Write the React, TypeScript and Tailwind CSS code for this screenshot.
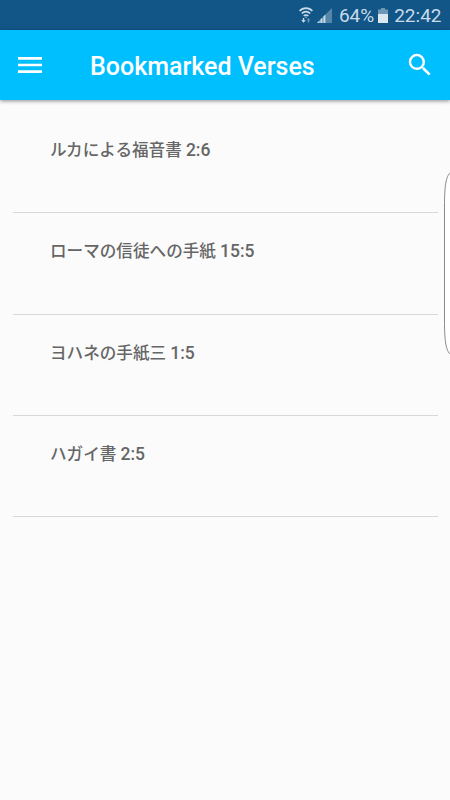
import { MdMenu, MdSearch } from 'react-icons/md';

const verses = [
  { id: 1, book: 'ルカによる福音書', ref: '2:6' },
  { id: 2, book: 'ローマの信徒への手紙', ref: '15:5' },
  { id: 3, book: 'ヨハネの手紙三', ref: '1:5' },
  { id: 4, book: 'ハガイ書', ref: '2:5' },
];

function WifiIcon() {
  return (
    <svg width="14" height="16" viewBox="0 0 14 16" fill="none" stroke="#c9dbe8" strokeWidth="1.6">
      <path d="M0.6 4C4 0.2 10 0.2 13.4 4" />
      <path d="M2.8 6.5C5 4 9 4 11.2 6.5" />
      <path d="M4.8 9C6 7.6 8 7.6 9.2 9" />
      <path d="M6 9.8h2l-1 1.4z" fill="#c9dbe8" stroke="none" />
      <path d="M3.8 11v2.2H2.2l2.3 2.6 2.3-2.6H5.2V11z" fill="#c9dbe8" stroke="none" />
      <path d="M8.8 15.4v-2.2H7.7l1.8-2.3 1.8 2.3h-1.1v2.2z" fill="#6d98b7" stroke="none" />
    </svg>
  );
}

function SignalIcon() {
  return (
    <svg width="15" height="15" viewBox="0 0 15 15">
      <path d="M0 15L15 0v15z" fill="#5686a9" />
      <path d="M0 15l2.5-2.5V15zM3.4 15v-3.4L5.4 9.6V15zM6.4 15V8.6l2-2V15z" fill="#c9dbe8" />
    </svg>
  );
}

function BatteryIcon() {
  return (
    <svg width="10" height="15" viewBox="0 0 10 15">
      <path d="M3 0h4v1.5h3V6H0V1.5h3z" fill="#6d98b7" />
      <path d="M0 6h10v9H0z" fill="#dce8f0" />
    </svg>
  );
}

export default function App() {
  return (
    <div className="relative flex h-[800px] w-[450px] flex-col overflow-hidden bg-[#fbfbfb] font-[Roboto,'Noto_Sans_CJK_JP',sans-serif]">
      {/* Status bar */}
      <div className="flex h-[30px] shrink-0 items-center justify-end bg-[#125688] pr-[8.5px] text-[19px] leading-none text-[#c9dbe8]">
        <div className="mr-[4px]">
          <WifiIcon />
        </div>
        <div className="mr-[6.5px]">
          <SignalIcon />
        </div>
        <span className="mr-[3.5px] pt-px">64%</span>
        <div className="mr-[6.5px]">
          <BatteryIcon />
        </div>
        <span className="pt-px">22:42</span>
      </div>

      {/* Toolbar */}
      <header className="z-10 flex h-[70px] shrink-0 items-center bg-[#00bfff] pr-[15px] pl-[14px] text-white shadow-[0_1px_4px_rgba(0,0,0,0.45)]">
        <button aria-label="Menu">
          <MdMenu size={32} />
        </button>
        <h1 className="ml-[44px] flex-1 pt-0.5 text-[25px] leading-none font-medium">Bookmarked Verses</h1>
        <button aria-label="Search">
          <MdSearch size={30} />
        </button>
      </header>

      {/* Verse list */}
      <ul className="px-[12.5px] pt-[12px]">
        {verses.map((v) => (
          <li
            key={v.id}
            className="h-[101.3px] border-b border-[#d8d8d8] pt-[26px] pl-[37.5px] text-[16.6px] leading-6 font-medium text-[#666666]"
          >
            {v.book} <span className="text-[17.5px]">{v.ref}</span>
          </li>
        ))}
      </ul>

      {/* Edge panel handle */}
      <div className="absolute top-[172px] right-0 h-[183px] w-[6px]">
        <svg width="6" height="183" viewBox="0 0 6 183" fill="#ffffff" stroke="#8a8a8a">
          <path d="M6.5 0.5C2 4 0.5 14 0.5 34v115c0 20 1.5 30 6 33.5" />
        </svg>
      </div>
    </div>
  );
}
